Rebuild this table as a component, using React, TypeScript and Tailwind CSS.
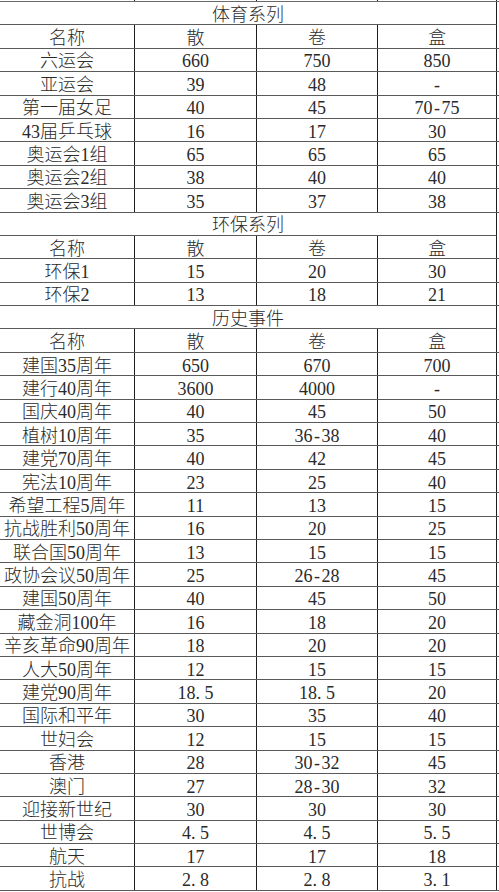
type Row = [string, string, string, string];

const sections: { title: string; rows: Row[] }[] = [
  {
    title: "体育系列",
    rows: [
      ["六运会", "660", "750", "850"],
      ["亚运会", "39", "48", "-"],
      ["第一届女足", "40", "45", "70-75"],
      ["43届乒乓球", "16", "17", "30"],
      ["奥运会1组", "65", "65", "65"],
      ["奥运会2组", "38", "40", "40"],
      ["奥运会3组", "35", "37", "38"],
    ],
  },
  {
    title: "环保系列",
    rows: [
      ["环保1", "15", "20", "30"],
      ["环保2", "13", "18", "21"],
    ],
  },
  {
    title: "历史事件",
    rows: [
      ["建国35周年", "650", "670", "700"],
      ["建行40周年", "3600", "4000", "-"],
      ["国庆40周年", "40", "45", "50"],
      ["植树10周年", "35", "36-38", "40"],
      ["建党70周年", "40", "42", "45"],
      ["宪法10周年", "23", "25", "40"],
      ["希望工程5周年", "11", "13", "15"],
      ["抗战胜利50周年", "16", "20", "25"],
      ["联合国50周年", "13", "15", "15"],
      ["政协会议50周年", "25", "26-28", "45"],
      ["建国50周年", "40", "45", "50"],
      ["藏金洞100年", "16", "18", "20"],
      ["辛亥革命90周年", "18", "20", "20"],
      ["人大50周年", "12", "15", "15"],
      ["建党90周年", "18.5", "18.5", "20"],
      ["国际和平年", "30", "35", "40"],
      ["世妇会", "12", "15", "15"],
      ["香港", "28", "30-32", "45"],
      ["澳门", "27", "28-30", "32"],
      ["迎接新世纪", "30", "30", "30"],
      ["世博会", "4.5", "4.5", "5.5"],
      ["航天", "17", "17", "18"],
      ["抗战", "2.8", "2.8", "3.1"],
    ],
  },
];

const header: Row = ["名称", "散", "卷", "盒"];

// 小数点、连字符按宋体的等宽样式占一个数字宽
const Value = ({ text }: { text: string }) => {
  if (text.length > 1 && text.includes("-")) {
    const [a, b] = text.split("-");
    return (
      <>
        {a}
        <span className="inline-block w-[9px] text-center">-</span>
        {b}
      </>
    );
  }
  if (text.includes(".")) {
    const [a, b] = text.split(".");
    return (
      <>
        {a}
        <span className="inline-block w-[9px] text-left">.</span>
        {b}
      </>
    );
  }
  return <>{text}</>;
};

const Cell = ({ text }: { text: string }) => (
  <div className="flex items-center justify-center border-r border-r-[#1e1e1e] pt-[3px] whitespace-nowrap">
    <Value text={text} />
  </div>
);

const TableRow = ({ row }: { row: Row }) => (
  <div className="grid h-[23.4px] grid-cols-[135px_122px_121px_119px] border-b border-b-[#5a5a5a]">
    {row.map((c, i) => (
      <Cell key={i} text={c} />
    ))}
  </div>
);

const App = () => {
  return (
    <div
      className="min-h-screen w-[499px] overflow-hidden bg-white text-[18px] leading-none font-light text-[#2a2a2a]"
      style={{ fontFamily: '"Liberation Serif", "Noto Sans CJK SC", serif' }}
    >
      {/* 上一段表格的残边 */}
      <div className="grid h-[2px] grid-cols-[135px_122px_121px_119px] border-b border-b-[#6a6a6a]">
        <div className="border-r border-r-[#1e1e1e]" />
        <div className="border-r border-r-[#1e1e1e]" />
        <div className="border-r border-r-[#1e1e1e]" />
        <div className="border-r border-r-[#1e1e1e]" />
      </div>

      {sections.map((s) => (
        <div key={s.title}>
          {/* 分类标题 */}
          <div className="flex h-[23.4px] w-[497px] items-center justify-center border-r border-b border-r-[#1e1e1e] border-b-[#5a5a5a] pt-[3px]">
            {s.title}
          </div>
          <TableRow row={header} />
          {s.rows.map((r) => (
            <TableRow key={r[0]} row={r} />
          ))}
        </div>
      ))}
    </div>
  );
};

export default App;
